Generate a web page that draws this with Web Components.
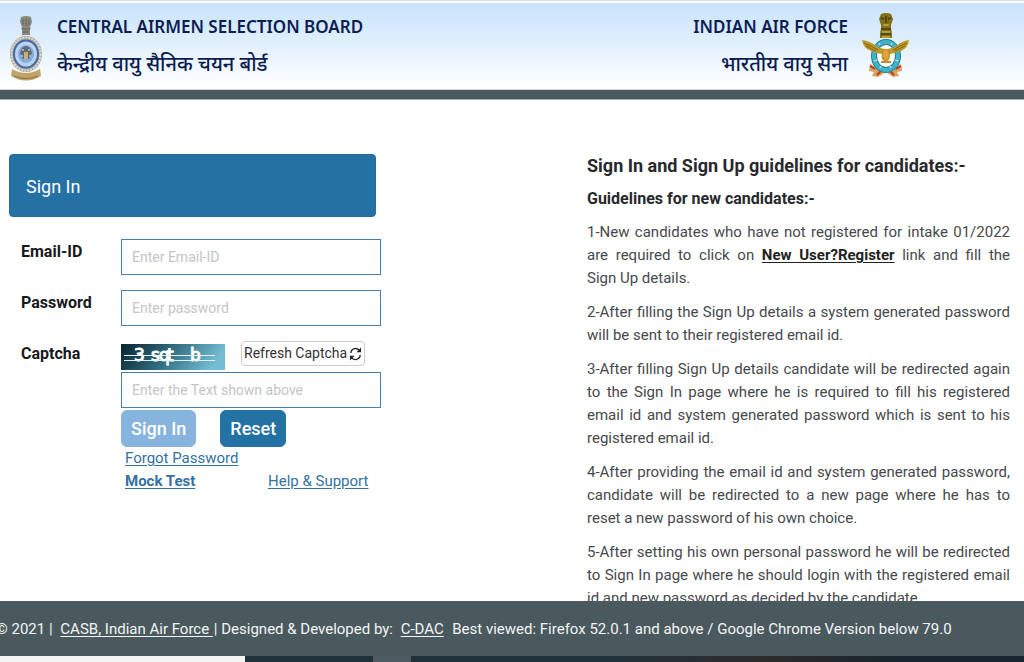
<!DOCTYPE html>
<html lang="en">
<head>
<meta charset="utf-8">
<title>Central Airmen Selection Board - Sign In</title>
<style>
  html, body { margin: 0; height: 100%; }
  body { font-family: Roboto, "Noto Sans", sans-serif; font-size: 15px; line-height: 23px; color: #46494c; background: #fff; overflow: hidden; }
</style>
</head>
<body>
<casb-app></casb-app>

<template id="t-app">
  <style>
    :host { display: flex; flex-direction: column; height: 100vh; }
    main { flex: 1; min-height: 0; overflow: hidden; box-sizing: border-box; padding: 54px 14px 0 9px; display: grid; grid-template-columns: minmax(0, 372fr) minmax(0, 423fr); column-gap: 206px; align-items: start; }
  </style>
  <casb-header></casb-header>
  <main>
    <sign-in-form></sign-in-form>
    <sign-guidelines></sign-guidelines>
  </main>
  <casb-footer></casb-footer>
  <task-strip></task-strip>
</template>

<template id="t-header">
  <style>
    :host { display: block; flex: none; border-top: 1px solid #dfe3ea; }
    header { display: flex; align-items: flex-start; justify-content: space-between; margin-top: 2px; height: 87px; box-sizing: border-box; padding: 10px 115px 0 9px; background: linear-gradient(#cae3fd, #e0effd 45%, #fbfdff 90%, #fff); color: #0b1d51; border-bottom: 1px solid #cfd4d6; }
    .bar { height: 10px; background: #4a595e; border-bottom: 1px solid #a4acaf; box-sizing: border-box; }
    .side { display: flex; gap: 14px; }
    .names { display: flex; flex-direction: column; gap: 7px; font-family: "Noto Sans", "Open Sans", sans-serif; }
    .right .names { text-align: right; }
    h1, h2 { margin: 0; white-space: nowrap; font-weight: 600; font-size: 17px; line-height: 28px; }
    h2 { font-weight: 500; font-size: 20px; line-height: 32px; }
    svg { display: block; }
    .crest { margin-top: 3px; }
  </style>
  <header>
    <div class="side">
      <svg class="crest" width="34" height="65" viewBox="0 0 34 65" aria-hidden="true">
        <path d="M12 1q5-2 10 0l1 5-2 5 1 2h-1v6h-8v-6h-1l1-2-2-5z" fill="#8d8a7c"/>
        <path d="M14 3v6M17 2v8M20 3v6M13 13h8M14 16h6" stroke="#5f6168" stroke-width="1" fill="none"/>
        <path d="M3 53l-1 7q15 9 30 0l-1-7q-14 8-28 0z" fill="#c2a468"/>
        <path d="M5 60q12 5 24 0" stroke="#8a733e" fill="none"/>
        <ellipse cx="17" cy="38" rx="16" ry="18" fill="#a9a79d"/>
        <ellipse cx="17" cy="38" rx="14.500" ry="16.500" fill="none" stroke="#dedcd2" stroke-width="2" stroke-dasharray="2 1"/>
        <ellipse cx="17" cy="38" rx="12" ry="13.500" fill="#b9d3f2" stroke="#4668a3" stroke-width="2"/>
        <ellipse cx="17" cy="38" rx="8" ry="9" fill="#84abd9"/>
        <path d="M13 32q4-4 8 0l2 5-3 6h-6l-3-6z" fill="#64697a"/>
        <path d="M15 36h4v7h-4z" fill="#c5b174"/>
        <path d="M13 34h2M19 34h2M12 40h2M20 40h2" stroke="#e2e5ea"/>
      </svg>
      <div class="names">
        <h1>CENTRAL AIRMEN SELECTION BOARD</h1>
        <h2 lang="hi">केन्द्रीय वायु सैनिक चयन बोर्ड</h2>
      </div>
    </div>
    <div class="side right">
      <div class="names">
        <h1>INDIAN AIR FORCE</h1>
        <h2 lang="hi">भारतीय वायु सेना</h2>
      </div>
      <svg width="47" height="65" viewBox="0 0 47 65" aria-hidden="true">
        <path d="M8 51l8 4 15 0 8-4 1 7-5 1 2 4-6 1-7-5-8 5-6-1 2-4-5-1z" fill="#d8a35c"/>
        <path d="M8 53l5 3M39 53l-5 3M15 62l4-4M32 62l-4-4" stroke="#b83a2e" stroke-width="2"/>
        <ellipse cx="24" cy="43" rx="12" ry="14" fill="#fff" stroke="#247f91" stroke-width="6"/>
        <ellipse cx="24" cy="43" rx="12" ry="14" fill="none" stroke="#43b4c8" stroke-width="4"/>
        <path d="M17 30l1 2M30 30l-1 2M12 48l3-1M36 48l-3-1M18 55l1-2M29 55l-1-2" stroke="#e0f6f6"/>
        <path d="M0 27q8 1 14 6 5 3 9 3l2 0q5 0 9-3 6-5 13-6-1 8-8 11-5 2-11 3 1 5-4 8-6-3-4-8-7-1-11-3-8-3-9-11z" fill="#bd9826"/>
        <path d="M2 30q8 3 14 7M45 30q-8 3-14 7M4 33q6 3 10 5M43 33q-6 3-10 5" stroke="#826718" fill="none"/>
        <path d="M22 38q2-3 4 0l1 5-3 5-3-5z" fill="#e6a33c"/>
        <path d="M19 49h10" stroke="#c9873a" stroke-width="2"/>
        <path d="M19 1q5-2 10 0l2 5-2 6v3l1 6v4H18v-4l1-6v-3l-2-6z" fill="#80701a"/>
        <path d="M19 5l3 1M29 5l-3 1M24 3v7M19 16h10M19 21h10" stroke="#453b12" stroke-width="1.500"/>
        <path d="M21 12h6M20 19h8M20 24h8" stroke="#b89d35" stroke-width="2"/>
      </svg>
    </div>
  </header>
  <div class="bar"></div>
</template>

<template id="t-field">
  <style>
    :host { display: grid; grid-template-columns: 100px minmax(0, 1fr); align-items: start; }
    label { font-weight: 700; font-size: 16px; line-height: 26px; color: #17191b; }
    input { box-sizing: border-box; width: 100%; height: 36px; margin: 0; padding: 0 10px; border: 1px solid #4a80a8; border-radius: 0; background: #fff; font: inherit; font-size: 14px; color: #333; }
    input::placeholder { color: #c3c5c7; opacity: 1; }
    .cell { display: flex; flex-direction: column; }
  </style>
  <label for="f"></label>
  <div class="cell"><slot></slot><input id="f"></div>
</template>

<template id="t-captcha">
  <style>
    :host { display: flex; align-items: flex-start; gap: 16px; height: 31px; }
    .code { display: block; margin-top: 3px; }
    button { display: flex; align-items: center; justify-content: center; gap: 2px; box-sizing: border-box; height: 25px; padding: 0 2px; border: 1px solid #ccc; border-radius: 4px; background: #fff; color: #333; font: inherit; font-size: 14px; white-space: nowrap; }
  </style>
  <svg class="code" width="104" height="26" viewBox="0 0 104 26" role="img" aria-label="Captcha code">
    <defs><linearGradient id="g" x1="0" y1="0" x2="1" y2="0.200"><stop offset="0" stop-color="#08242f"/><stop offset="0.500" stop-color="#2f6a7d"/><stop offset="1" stop-color="#73bcd3"/></linearGradient></defs>
    <rect width="104" height="26" fill="url(#g)"/>
    <g font-family="DejaVu Sans" font-size="17" fill="#fff" stroke="#fff">
      <text x="13" y="17">3</text>
      <text x="30 38 46" y="17">sqt</text>
      <text x="69" y="17">b</text>
    </g>
    <path d="M3 11.500h91M3 16.500h91" stroke="#e5f1f4"/>
  </svg>
  <button type="button">Refresh Captcha
    <svg width="13" height="16" viewBox="0 0 14 16" aria-hidden="true">
      <path d="M2 7q0-4 5-5 3 0 4.500 2.500M12 9q0 4-5 5-3 0-4.500-2.500" fill="none" stroke="#222" stroke-width="1.500"/>
      <path d="M13 1v5H8zM1 15v-5h5z" fill="#222"/>
    </svg>
  </button>
</template>

<template id="t-form">
  <style>
    :host { display: block; }
    .title { margin: 0 5px 22px 0; box-sizing: border-box; height: 63px; padding: 2px 16px 0; display: flex; align-items: center; background: #2471a4; border: 1px solid #2a6a96; border-radius: 4px; color: #fff; font-size: 18px; font-weight: 400; }
    form { display: flex; flex-direction: column; gap: 15px; padding-left: 12px; }
    .after { margin: -13px 0 0 100px; }
    .buttons { display: flex; gap: 24px; }
    .buttons button { box-sizing: border-box; height: 37px; padding: 0 9px; border: 1px solid #2471a4; border-radius: 6px; background: #2471a4; color: #fff; font: inherit; font-size: 18px; font-weight: 500; }
    .buttons .dim { background: #86b4de; border-color: #86b4de; }
    .links { display: grid; grid-template-columns: 143px 1fr; padding: 0 0 0 4px; }
    .links a { color: #34719f; justify-self: start; text-underline-offset: 2px; white-space: nowrap; }
    .links .wide { grid-column: 1 / -1; }
    .links .strong { font-weight: 700; }
  </style>
  <h2 class="title">Sign In</h2>
  <form>
    <form-field label="Email-ID" type="email" placeholder="Enter Email-ID"></form-field>
    <form-field label="Password" type="password" placeholder="Enter password"></form-field>
    <form-field label="Captcha" type="text" placeholder="Enter the Text shown above"><captcha-box></captcha-box></form-field>
    <div class="after">
      <div class="buttons">
        <button type="button" class="dim">Sign In</button>
        <button type="reset">Reset</button>
      </div>
      <div class="links">
        <a class="wide" href="#forgot">Forgot Password</a>
        <a class="strong" href="#mock">Mock Test</a>
        <a href="#help">Help &amp; Support</a>
      </div>
    </div>
  </form>
</template>

<template id="t-guide">
  <style>
    :host { display: block; }
    h2 { margin: 0; font-size: 18px; line-height: 24px; font-weight: 700; color: #27292c; white-space: nowrap; }
    h3 { margin: 9px 0 10px; font-size: 16px; line-height: 24px; font-weight: 700; color: #27292c; }
    p { margin: 0 0 11px; text-align: justify; }
    a { color: #222; font-weight: 700; text-underline-offset: 2px; }
  </style>
  <h2>Sign In and Sign Up guidelines for candidates:-</h2>
  <h3>Guidelines for new candidates:-</h3>
  <p>1-New candidates who have not registered for intake 01/2022 are required to click on <a href="#register">New User?Register</a> link and fill the Sign&nbsp;Up details.</p>
  <p>2-After filling the Sign Up details a system generated password will be sent to their registered email id.</p>
  <p>3-After filling Sign Up details candidate will be redirected again to the Sign In page where he is required to fill his registered email id and system generated password which is sent to his registered email id.</p>
  <p>4-After providing the email id and system generated password, candidate will be redirected to a new page where he has to reset a new password of his own choice.</p>
  <p>5-After setting his own personal password he will be redirected to Sign In page where he should login with the registered email id and new password as decided by the candidate.</p>
</template>

<template id="t-footer">
  <style>
    :host { display: block; flex: none; background: #4a595e; color: #f2f4f5; overflow: hidden; }
    p { margin: 0 0 0 -4px; padding: 16px 0 15px; line-height: 24px; white-space: pre; }
    a { color: inherit; margin: 0 1px 0 4px; text-underline-offset: 2px; }
  </style>
  <footer><p>© 2021 | <a href="#casb">CASB, Indian Air Force </a>| Designed &amp; Developed by: <a href="#cdac">C-DAC</a>  Best viewed: Firefox 52.0.1 and above / Google Chrome Version below 79.0</p></footer>
</template>

<template id="t-strip">
  <style>
    :host { display: grid; flex: none; grid-template-columns: 245px 128px 38px 1fr; height: 6px; background: #20323c; }
    .search { background: #f3f3f3; }
    .active { grid-column: 3; background: #4e5b63; }
    .rest { background: linear-gradient(90deg, #20323c 30%, #2c2b2b 58%, #17252e 80%); }
  </style>
  <div class="search"></div><div class="active"></div><div class="rest"></div>
</template>

<script>
  class Base extends HTMLElement {
    constructor() {
      super();
      const t = document.getElementById(this.constructor.template);
      this.attachShadow({ mode: "open" }).append(document.importNode(t.content, true));
    }
  }
  const define = (tag, template) =>
    customElements.define(tag, class extends Base { static template = template; });

  class FormField extends Base {
    static template = "t-field";
    connectedCallback() {
      this.shadowRoot.querySelector("label").textContent = this.getAttribute("label");
      const input = this.shadowRoot.querySelector("input");
      input.type = this.getAttribute("type") || "text";
      input.placeholder = this.getAttribute("placeholder") || "";
    }
  }

  define("captcha-box", "t-captcha");
  customElements.define("form-field", FormField);
  define("casb-header", "t-header");
  define("sign-in-form", "t-form");
  define("sign-guidelines", "t-guide");
  define("casb-footer", "t-footer");
  define("task-strip", "t-strip");
  define("casb-app", "t-app");
</script>
</body>
</html>
